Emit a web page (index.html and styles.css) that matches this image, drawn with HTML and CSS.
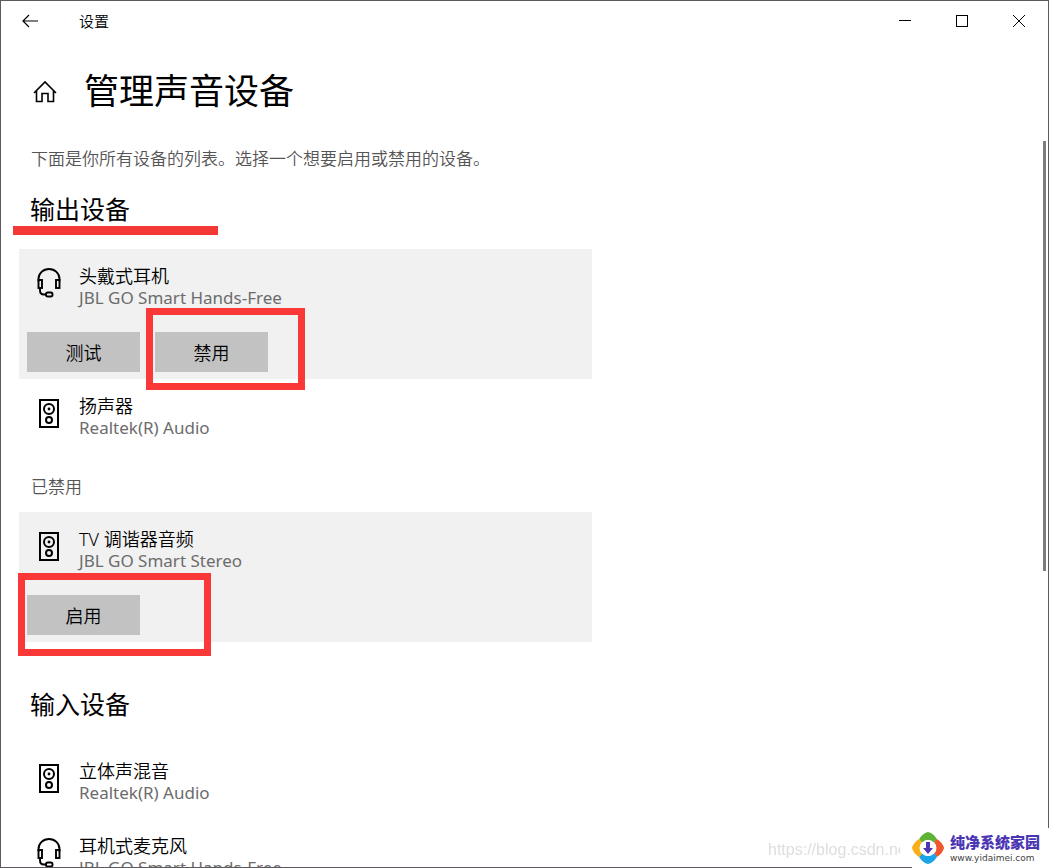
FILE: index.html
```html
<!DOCTYPE html>
<html lang="zh-CN">
<head>
<meta charset="utf-8">
<meta name="viewport" content="width=device-width, initial-scale=1">
<title>设置</title>
<link rel="stylesheet" href="styles.css">
</head>
<body>
<svg class="symbols" aria-hidden="true">
  <symbol id="headset" viewBox="0 0 24 30">
    <g fill="none" stroke="currentColor" stroke-width="1.900">
      <path d="M1.500 13.500V11a10.500 10 0 0 1 21 0v2.500"/>
      <rect x="1.500" y="12" width="3.500" height="8"/>
      <rect x="19" y="12" width="3.500" height="8"/>
      <path d="M3 20v2.500q0 4 4 4h2"/>
      <rect x="9" y="24.500" width="6.500" height="4" rx="1.800"/>
    </g>
  </symbol>
  <symbol id="speaker" viewBox="0 0 24 30">
    <g fill="none" stroke="currentColor" stroke-width="2">
      <rect x="3" y="2" width="18" height="27"/>
      <circle cx="12" cy="11" r="5"/>
      <circle cx="12" cy="22" r="3"/>
    </g>
    <circle cx="12" cy="11" r="1.400" fill="currentColor"/>
  </symbol>
</svg>

<div class="window">
  <header class="titlebar">
    <button class="back" type="button" aria-label="返回">
      <svg width="16" height="14" viewBox="0 0 16 14"><path d="M7 1 1 7l6 6M1 7h15" fill="none" stroke="currentColor" stroke-width="1.200"/></svg>
    </button>
    <span class="app-name">设置</span>
    <div class="controls">
      <button type="button" aria-label="最小化"><svg width="12" height="12" viewBox="0 0 12 12"><path d="M0 5.500h12" stroke="currentColor"/></svg></button>
      <button type="button" aria-label="最大化"><svg width="12" height="12" viewBox="0 0 12 12"><rect x=".5" y=".5" width="11" height="11" fill="none" stroke="currentColor"/></svg></button>
      <button type="button" aria-label="关闭"><svg width="12" height="12" viewBox="0 0 12 12"><path d="m0 0 12 12M12 0 0 12" stroke="currentColor"/></svg></button>
    </div>
  </header>

  <main class="page">
    <div class="heading">
      <a class="home" href="#" aria-label="主页">
        <svg width="24" height="24" viewBox="0 0 24 24"><path d="M1 14 12 3 23 14M3.500 12v10.500H9v-8h6v8h5.500V12" fill="none" stroke="currentColor" stroke-width="1.600"/></svg>
      </a>
      <h1>管理声音设备</h1>
    </div>
    <p class="intro">下面是你所有设备的列表。选择一个想要启用或禁用的设备。</p>

    <section>
      <h2 class="marked">输出设备</h2>
      <ul class="devices">
        <li class="selected">
          <div class="device">
            <svg class="icon"><use href="#headset"/></svg>
            <div><div class="name">头戴式耳机</div><div class="detail">JBL GO Smart Hands-Free</div></div>
          </div>
          <div class="actions">
            <button type="button">测试</button>
            <div class="target"><button type="button">禁用</button><span class="frame frame-disable"></span></div>
          </div>
        </li>
        <li>
          <div class="device">
            <svg class="icon"><use href="#speaker"/></svg>
            <div><div class="name">扬声器</div><div class="detail">Realtek(R) Audio</div></div>
          </div>
        </li>
      </ul>
      <h3>已禁用</h3>
      <ul class="devices">
        <li class="selected">
          <div class="device">
            <svg class="icon"><use href="#speaker"/></svg>
            <div><div class="name">TV 调谐器音频</div><div class="detail">JBL GO Smart Stereo</div></div>
          </div>
          <div class="actions">
            <div class="target"><button type="button">启用</button><span class="frame frame-enable"></span></div>
          </div>
        </li>
      </ul>
    </section>

    <section class="inputs">
      <h2>输入设备</h2>
      <ul class="devices">
        <li>
          <div class="device">
            <svg class="icon"><use href="#speaker"/></svg>
            <div><div class="name">立体声混音</div><div class="detail">Realtek(R) Audio</div></div>
          </div>
        </li>
        <li>
          <div class="device">
            <svg class="icon"><use href="#headset"/></svg>
            <div><div class="name">耳机式麦克风</div><div class="detail">JBL GO Smart Hands-Free</div></div>
          </div>
        </li>
      </ul>
    </section>
  </main>
  <div class="scrollbar"></div>
</div>

<div class="source">https://blog.csdn.ne</div>
<div class="brand">
  <svg width="32" height="32" viewBox="0 0 32 32">
    <path d="M7 7Q11 1 16 0q5 1 9 7l-3 4Q16 5 10 11z" fill="#5fb336"/>
    <path d="M25 7q6 4 7 9-1 5-7 9l-3-3q5-6 0-12z" fill="#f0572c"/>
    <path d="M7 25q4 6 9 7 5-1 9-7l-3-4q-6 6-12 0z" fill="#1ba5e8"/>
    <path d="M7 7Q1 11 0 16q1 5 7 9l3-3q-5-6 0-12z" fill="#f9ae1b"/>
    <circle cx="16" cy="16" r="8" fill="#fff"/>
    <path d="M14 10h4v6h3l-5 6-5-6h3z" fill="#4b36b4"/>
  </svg>
  <div><div class="brand-name">纯净系统家园</div><div class="brand-url">www.yidaimei.com</div></div>
</div>
</body>
</html>
```

FILE: styles.css
```css
* { box-sizing: border-box; }

body {
  margin: 0;
  overflow: hidden;
  background: #fff;
  color: #000;
  font-family: "Noto Sans", "Noto Sans CJK SC", sans-serif;
  font-weight: 350;
}

button {
  padding: 0;
  border: 0;
  background: transparent;
  color: inherit;
  font: inherit;
}

h1, h2, h3, p, ul { margin: 0; padding: 0; font-weight: inherit; }

.symbols { position: absolute; width: 0; height: 0; }

.window {
  position: relative;
  height: 100vh;
  overflow: hidden;
  border: 1px solid #5c5a5c;
}

.titlebar { display: flex; align-items: center; height: 40px; padding-right: 1px; }
.back { display: flex; justify-content: center; width: 58px; }
.app-name { flex: 1; padding-left: 20px; font-size: 15px; line-height: 20px; }
.controls { display: flex; }
.controls button {
  display: flex;
  align-items: center;
  justify-content: center;
  width: 57px;
  height: 40px;
}

.page { padding-left: 18px; }

.heading { display: flex; align-items: center; height: 100px; }
.home { display: flex; width: 65px; padding-left: 14px; color: inherit; }
h1 { font-size: 35px; font-weight: 400; line-height: 48px; }

.intro { padding-left: 12px; color: #555; font-size: 17px; line-height: 36px; }

h2 { padding: 0 0 8px 11px; font-size: 25px; font-weight: 400; line-height: 64px; }
.marked { position: relative; }
.marked::after {
  content: "";
  position: absolute;
  left: -6px;
  bottom: 14px;
  width: 205px;
  height: 9px;
  background: #f33835;
}

h3 { padding: 8px 0 0 12px; color: #555; font-size: 17px; line-height: 50px; }

.devices { max-width: 573px; list-style: none; }
.selected { background: #f1f1f1; }
.device { display: flex; padding: 15px 0 16px 18px; }
.icon { width: 24px; height: 30px; margin: 4px 18px 0 0; }
.name { font-size: 18px; line-height: 24px; }
.detail { color: #6c6c6c; font-size: 17px; font-weight: 400; line-height: 20px; }

.actions { display: flex; gap: 15px; padding: 8px 8px 7px; }
.actions button {
  width: 113px;
  height: 40px;
  background: #c2c2c2;
  font-size: 18px;
}
.target { position: relative; }
.frame { position: absolute; border: 7px solid #fa3837; pointer-events: none; }
.frame-disable { left: -9px; top: -24px; width: 159px; height: 82px; }
.frame-enable { left: -9px; top: -22px; width: 193px; height: 83px; }

.inputs { padding-top: 30px; }

.scrollbar {
  position: absolute;
  top: 140px;
  right: 2px;
  width: 3px;
  height: 430px;
  background: #7c7c7c;
}

.source {
  position: fixed;
  right: 149px;
  bottom: 6px;
  width: 132px;
  overflow: hidden;
  color: #dedede;
  font-family: "Liberation Sans", sans-serif;
  font-size: 16px;
  font-weight: 400;
  line-height: 24px;
  white-space: nowrap;
}

.brand {
  position: fixed;
  right: 0;
  bottom: 0;
  display: flex;
  align-items: center;
  gap: 6px;
  width: 137px;
  height: 40px;
  background: #fff;
}
.brand-name { color: #4b36b4; font-size: 15px; font-weight: 900; line-height: 20px; }
.brand-url { color: #444; font-family: "DejaVu Sans", sans-serif; font-size: 9px; font-weight: 400; line-height: 12px; }
```
